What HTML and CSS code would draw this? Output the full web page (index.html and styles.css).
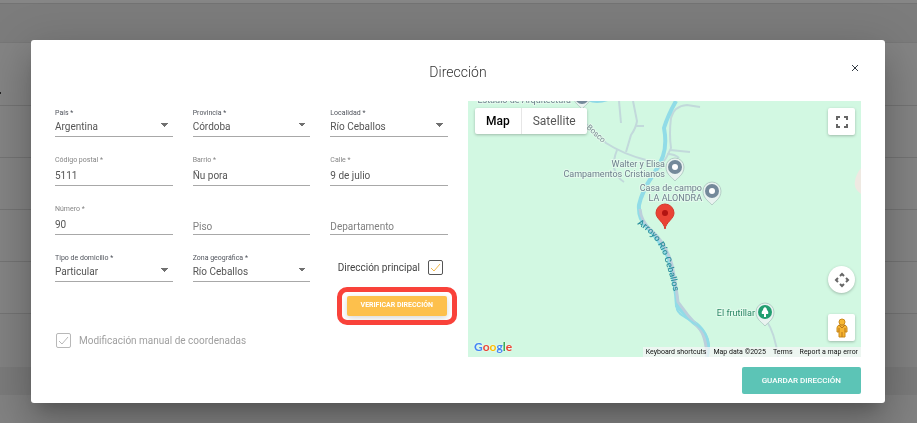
FILE: index.html
```html
<!DOCTYPE html>
<html lang="es">
<head>
<meta charset="utf-8">
<meta name="viewport" content="width=device-width, initial-scale=1">
<title>Dirección</title>
<link rel="stylesheet" href="styles.css">
</head>
<body>
<div class="page" aria-hidden="true">
  <div class="page-bar"></div>
  <div class="page-head"></div>
  <div class="page-row page-row-first"><i class="page-mark"></i></div>
  <div class="page-row"></div>
  <div class="page-row"></div>
  <div class="page-row"></div>
  <div class="page-row"></div>
  <div class="page-space"></div>
  <div class="page-foot"></div>
</div>

<main class="dialog" role="dialog" aria-labelledby="dialog-title">
  <header class="dialog-head">
    <h1 id="dialog-title">Dirección</h1>
    <button class="close" type="button" aria-label="Cerrar">
      <svg viewBox="0 0 8 8"><path d="M1 1l6 6M7 1L1 7"/></svg>
    </button>
  </header>

  <div class="columns">
    <form class="form">
      <div class="fields">
        <div class="field field-select">
          <label for="pais">País *</label>
          <select id="pais"><option>Argentina</option></select>
        </div>
        <div class="field field-select">
          <label for="provincia">Provincia *</label>
          <select id="provincia"><option>Córdoba</option></select>
        </div>
        <div class="field field-select">
          <label for="localidad">Localidad *</label>
          <select id="localidad"><option>Río Ceballos</option></select>
        </div>
        <div class="field">
          <label for="cp">Código postal *</label>
          <input id="cp" type="text" value="5111">
        </div>
        <div class="field">
          <label for="barrio">Barrio *</label>
          <input id="barrio" type="text" value="Ñu pora">
        </div>
        <div class="field">
          <label for="calle">Calle *</label>
          <input id="calle" type="text" value="9 de julio">
        </div>
        <div class="field">
          <label for="numero">Número *</label>
          <input id="numero" type="text" value="90">
        </div>
        <div class="field field-empty">
          <label for="piso">Piso</label>
          <input id="piso" type="text">
        </div>
        <div class="field field-empty">
          <label for="depto">Departamento</label>
          <input id="depto" type="text">
        </div>
        <div class="field field-select">
          <label for="tipo">Tipo de domicilio *</label>
          <select id="tipo"><option>Particular</option></select>
        </div>
        <div class="field field-select">
          <label for="zona">Zona geográfica *</label>
          <select id="zona"><option>Río Ceballos</option></select>
        </div>
        <div class="check check-main">
          <label for="principal">Dirección principal</label>
          <span class="box">
            <input id="principal" type="checkbox" checked>
            <svg viewBox="0 0 15 15"><path d="M3 8l3 3 6-7"/></svg>
          </span>
        </div>
      </div>
      <div class="verify">
        <span class="verify-ring"><button class="btn btn-verify" type="button">VERIFICAR DIRECCIÓN</button></span>
      </div>
      <div class="check check-manual">
        <span class="box">
          <input id="manual" type="checkbox" checked disabled>
          <svg viewBox="0 0 15 15"><path d="M3 8l3 3 6-7"/></svg>
        </span>
        <label for="manual">Modificación manual de coordenadas</label>
      </div>
    </form>

    <section class="map" aria-label="Mapa">
      <svg class="map-canvas" viewBox="0 0 393 256" preserveAspectRatio="xMidYMid slice">
        <defs>
          <path id="river-label" d="M169 123Q187 134 195 153Q202 173 206 194L208 206"/>
          <path id="pin" d="M0 13C-2 10-9 7-9-1A9 9 0 0 1 9-1C9 7 2 10 0 13Z" fill="#e9f3f0" stroke="#b4cec6" stroke-width="1"/>
        </defs>
        <path d="M393 67Q388 73 387 80Q385 87 393 93Z" fill="#efe9e2"/>
        <path d="M120 0Q128 4 140 0Z" fill="#8fd9e6"/>
        <g class="road">
          <path d="M116 21L138 42Q155 53 178 59L194 67"/>
          <path d="M151 0L153 22"/>
          <path d="M165 0L169 20Q168 27 163 34L158 51M168 25L176 25"/>
          <path d="M149 49Q145 59 146 67Q149 77 156 81"/>
          <path d="M232 6L219 4Q206 5 203 17Q201 33 203 47Q199 57 192 66Q180 78 174 97M202 49L222 51M199 53Q207 53 211 57"/>
          <path d="M298 219Q307 232 310 256"/>
        </g>
        <path class="river" d="M208 0Q200 14 196 27Q199 43 195 55Q193 61 185 74Q174 90 171 104Q170 118 179 126Q194 142 201 158Q208 184 209 205Q216 213 225 221Q238 229 240 245L239 256"/>
        <path class="road road-river" d="M172 108Q173 120 183 129Q198 142 204 164Q208 184 210 201Q220 215 230 226Q238 234 239 256"/>
        <path class="river river-thin" d="M209 203Q207 210 215 215L229 224Q240 232 241 244L240 256"/>
        <g class="poi">
          <text x="103" y="2" text-anchor="end">Estudio de Arquitectura</text>
          <text x="197" y="66" text-anchor="end">Walter y Elisa</text>
          <text x="197" y="76" text-anchor="end">Campamentos Cristianos</text>
          <text x="234" y="90" text-anchor="end">Casa de campo</text>
          <text x="234" y="100" text-anchor="end">LA ALONDRA</text>
          <text x="287" y="215" text-anchor="end" class="poi-green">El frutillar</text>
          <text class="street" transform="translate(118 27) rotate(42)">Bosco</text>
        </g>
        <text class="river-text"><textPath href="#river-label">Arroyo Río Ceballos</textPath></text>
        <g transform="translate(114 -5)"><use href="#pin"/><circle r="7" cy="1" fill="#74899a"/></g>
        <g transform="translate(207 67)"><use href="#pin"/><circle r="7" cy="-1" fill="#74899a"/><circle r="3" cy="-1" fill="#fff"/></g>
        <g transform="translate(244 91)"><use href="#pin"/><circle r="7" cy="-1" fill="#74899a"/><circle r="3" cy="-1" fill="#fff"/></g>
        <g transform="translate(297 212)"><use href="#pin"/><circle r="7" cy="-1" fill="#229e70"/><path d="M0-6Q2-5 2-3Q4-1 3 1H1V4H-1V1H-3Q-4-1-2-3Q-2-5 0-6Z" fill="#fff"/></g>
        <g transform="translate(197 128)"><path d="M0 0C-1-7-9-10-9-16A9 9 0 0 1 9-16C9-10 1-7 0 0Z" fill="#ea4335" stroke="#d5382c" stroke-width="1"/><circle cy="-16" r="3" fill="#b31412"/></g>
      </svg>

      <div class="map-type">
        <button type="button" class="active">Map</button>
        <button type="button">Satellite</button>
      </div>
      <button class="map-btn map-full" type="button" aria-label="Pantalla completa">
        <svg viewBox="0 0 12 12"><path d="M1 4V1h3M8 1h3v3M11 8v3H8M4 11H1V8"/></svg>
      </button>
      <div class="map-side">
        <button class="map-btn map-pan" type="button" aria-label="Mover mapa">
          <svg viewBox="0 0 16 16"><path d="M6 4L8 2l2 2M6 12L8 14l2-2M4 6L2 8l2 2M12 6L14 8l-2 2"/></svg>
        </button>
        <button class="map-btn map-peg" type="button" aria-label="Street View">
          <svg viewBox="0 0 12 20"><path d="M3 7Q1 8 1 10V14H3V19H9V14H11V10Q11 8 9 7Z" fill="#f5b32f" stroke="#c98a1d" stroke-width="1"/><circle cx="6" cy="4" r="3" fill="#f7b731" stroke="#c98a1d"/><path d="M3 7L6 10L9 7M6 14V19M3 10V14M9 10V14" fill="none" stroke="#b9771b"/></svg>
        </button>
      </div>
      <a class="google" href="#" aria-label="Google"><span class="g-blue">G</span><span class="g-red">o</span><span class="g-yellow">o</span><span class="g-blue">g</span><span class="g-green">l</span><span class="g-red">e</span></a>
      <div class="map-legal">
        <button type="button">Keyboard shortcuts</button>
        <span>Map data ©2025</span>
        <a href="#">Terms</a>
        <a href="#">Report a map error</a>
      </div>
    </section>
  </div>

  <footer class="dialog-foot">
    <button class="btn btn-save" type="button">GUARDAR DIRECCIÓN</button>
  </footer>
</main>
</body>
</html>
```
FILE: styles.css
```css
* { box-sizing: border-box; }

body {
  margin: 0;
  min-height: 100vh;
  padding: 40px 32px 20px 31px;
  background: #828282;
  color: #555;
  font-family: Roboto, "Liberation Sans", sans-serif;
  font-size: 10px;
  overflow: hidden;
}

button, input, select { font: inherit; color: inherit; margin: 0; padding: 0; border: 0; background: none; }
a { color: inherit; text-decoration: none; }
svg { display: block; }

/* Dimmed page behind the dialog */
.page { position: fixed; inset: 0; z-index: -1; display: flex; flex-direction: column; }
.page-bar { height: 3px; background: #868686; }
.page-head { height: 40px; background: #7c7c7c; border-top: 1px solid #737373; border-bottom: 1px solid #777; }
.page-row { height: 52px; background: #848484; border-bottom: 1px solid #747474; }
.page-row-first { height: 63px; padding-top: 49px; }
.page-mark { display: block; width: 1px; height: 2px; background: #222; }
.page-space { height: 53px; background: #828282; }
.page-foot { height: 28px; background: #7b7b7b; }

.dialog {
  padding: 20px 24px 9px;
  background: #fff;
  border-radius: 3px;
  box-shadow: 0 11px 15px -7px rgba(0, 0, 0, .2), 0 24px 38px 3px rgba(0, 0, 0, .14), 0 9px 46px 8px rgba(0, 0, 0, .12);
}

.dialog-head { position: relative; margin-bottom: 17px; }
.dialog-head h1 { margin: 0; font-size: 14px; line-height: 24px; font-weight: 300; text-align: center; color: #333; }
.close { position: absolute; top: 0; right: 0; width: 12px; height: 16px; display: grid; place-items: center; }
.close svg { width: 8px; height: 8px; fill: none; stroke: #333b44; stroke-width: 1; }

.columns { display: grid; grid-template-columns: 1fr 1fr; gap: 20px; }

/* Form */
.form { padding-top: 7px; }
.fields { display: grid; grid-template-columns: repeat(3, 1fr); gap: 18px 20px; }
.field { display: flex; flex-direction: column; min-width: 0; border-bottom: 1px solid #a8a8a8; }
.field label { font-size: 7px; line-height: 10px; color: #858585; }
.field input, .field select { width: 100%; height: 20px; color: #555; outline: none; }
.field-select label { color: #50545c; }
.field select {
  height: 18px;
  padding-bottom: 1px;
  appearance: none;
  background: linear-gradient(to bottom right, #707070 50%, transparent 50%) no-repeat right 4px top 5px / 4px 4px,
              linear-gradient(to bottom left, #707070 50%, transparent 50%) no-repeat right 8px top 5px / 4px 4px;
}
.field-empty { display: grid; }
.field-empty label, .field-empty input { grid-area: 1 / 1; }
.field-empty label { align-self: end; font-size: 10px; line-height: 14px; color: #808080; }
.field-empty input { align-self: end; }

.check { display: flex; align-items: center; gap: 8px; line-height: 15px; }
.check-main { justify-content: flex-end; padding-right: 5px; color: #444; }
.check-manual { margin: 17px 0 0 1px; color: #a0a0a0; }
.box { display: grid; width: 15px; height: 15px; }
.box > * { grid-area: 1 / 1; width: 15px; height: 15px; }
.box input { appearance: none; border: 1px solid #555; border-radius: 2px; }
.box svg { fill: none; stroke: #f2b84b; stroke-width: 1; pointer-events: none; }
.check-manual .box input { border-color: #b8b8b8; }
.check-manual .box svg { stroke: #b8b8b8; }

.verify { display: flex; justify-content: flex-end; margin: 14px 1px 0 0; }
.verify-ring { position: relative; display: flex; }
.verify-ring::after { content: ""; position: absolute; inset: -9px -10px; border: 5px solid #f9423a; border-radius: 10px; pointer-events: none; }

.btn { border-radius: 2px; color: #fff; font-weight: 500; white-space: nowrap; }
.btn-verify { height: 20px; padding: 0 14px 3px; background: #fdc04c; font-size: 7px; font-weight: 700; box-shadow: 0 2px 6px rgba(0, 0, 0, .16); }
.btn-save { height: 27px; padding: 0 20px; background: #5cc4b6; font-size: 8px; }
.dialog-foot { display: flex; justify-content: flex-end; margin-top: 10px; }

/* Map */
.map { position: relative; height: 256px; overflow: hidden; background: #d2f8e2; }
.map-canvas { width: 100%; height: 100%; }
.road { fill: none; stroke: #c2d9db; stroke-width: 2; }
.road-river { stroke: #bccfdc; stroke-width: 3; }
.river { fill: none; stroke: #91dce7; stroke-width: 4; }
.river-thin { stroke-width: 2; }
.poi text { font-size: 9px; fill: #6f7f8d; stroke: #e3faec; stroke-width: 2; paint-order: stroke; }
.poi .poi-green { fill: #2c8766; }
.poi .street { font-size: 8px; fill: #7d8a94; }
.river-text { font-size: 9px; font-weight: 500; fill: #2e919e; }

.map-type { position: absolute; top: 7px; left: 7px; display: flex; background: #fff; border-radius: 2px; box-shadow: 0 1px 3px rgba(0, 0, 0, .25); }
.map-type button { height: 26px; padding: 0 11px; font-size: 12px; color: #565656; }
.map-type .active { color: #000; font-weight: 500; border-right: 1px solid #e6e6e6; }

.map-btn { display: grid; place-items: center; width: 27px; height: 27px; background: #fff; border-radius: 2px; box-shadow: 0 1px 3px rgba(0, 0, 0, .25); }
.map-btn svg { fill: none; stroke: #666; stroke-width: 2; }
.map-full { position: absolute; top: 7px; right: 6px; }
.map-full svg { width: 12px; height: 12px; }
.map-side { position: absolute; right: 6px; bottom: 16px; display: grid; gap: 21px; }
.map-pan { border-radius: 50%; }
.map-pan svg { width: 16px; height: 16px; }
.map-peg svg { width: 12px; height: 20px; stroke-width: 1; }

.google { position: absolute; left: 6px; bottom: 2px; font-family: Lato, sans-serif; font-size: 12px; font-weight: 700; line-height: 16px; text-shadow: 0 0 2px #fff; }
.g-blue { color: #4285f4; }
.g-red { color: #ea4335; }
.g-yellow { color: #fbbc05; }
.g-green { color: #34a853; }

.map-legal { position: absolute; right: 0; bottom: 0; display: flex; gap: 7px; padding: 0 3px; background: rgba(245, 245, 245, .75); color: #111; font-size: 7px; line-height: 10px; white-space: nowrap; }
```
